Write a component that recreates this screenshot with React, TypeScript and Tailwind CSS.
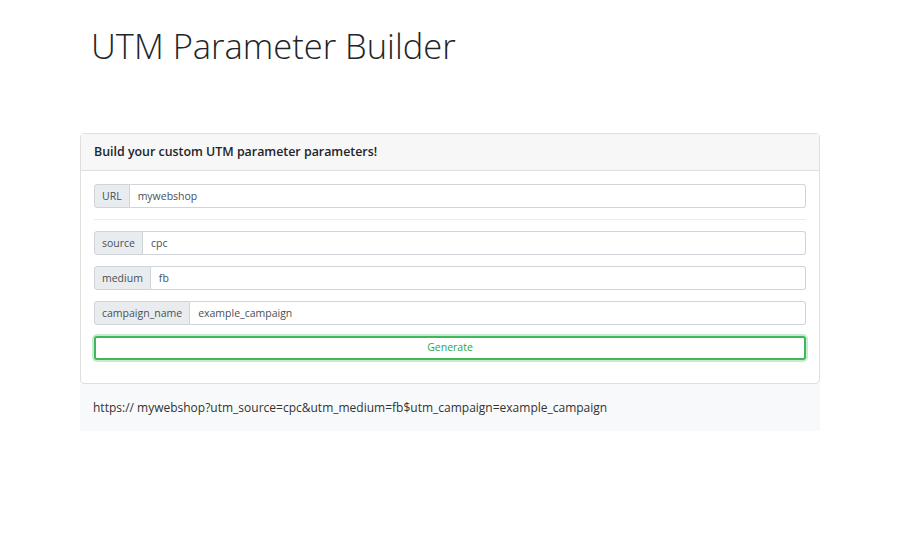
import React from "react";

const fields = [
  { label: "source", value: "cpc" },
  { label: "medium", value: "fb" },
  { label: "campaign_name", value: "example_campaign" },
];

function InputRow({ label, value }: { label: string; value: string }) {
  return (
    <div className="flex h-[24px] text-[10.5px] text-[#495057]">
      <span className="flex items-center px-[7px] pt-[1px] bg-[#e9ecef] border border-[#ced4da] rounded-l-[3px]">
        {label}
      </span>
      <div className="flex-1 flex items-center px-[8px] pt-[1px] border border-l-0 border-[#ced4da] rounded-r-[3px] bg-white">
        {value}
      </div>
    </div>
  );
}

export default function App() {
  return (
    <div className="min-h-screen bg-white font-['Open_Sans',sans-serif] text-[#212529]">
      <div className="w-[740px] ml-[80px]">
        <h1 className="pt-[20px] pl-[11px] text-[34.5px] font-light leading-[52px] text-[#212529]">
          UTM Parameter Builder
        </h1>

        <div className="mt-[61px] border border-[#dfdfdf] rounded-[4px]">
          <div className="h-[37px] flex items-center px-[13px] bg-[#f7f7f7] border-b border-[#dfdfdf] text-[12.4px] font-semibold">
            Build your custom UTM parameter parameters!
          </div>
          <div className="px-[13px] pt-[13px] pb-[23px]">
            <InputRow label="URL" value="mywebshop" />
            <hr className="my-[11px] border-[#ececec]" />
            <div className="flex flex-col gap-[11px]">
              {fields.map((f) => (
                <InputRow key={f.label} label={f.label} value={f.value} />
              ))}
              <button className="h-[24px] w-full text-[10.5px] text-[#28a745] border-2 border-[#3fb75a] rounded-[3px] shadow-[0_0_0_2px_rgba(40,167,69,0.25)] bg-white">
                Generate
              </button>
            </div>
          </div>
        </div>

        <div className="h-[47px] flex items-center px-[13px] bg-[#f8f9fa] text-[12px] text-[#333]">
          https:// mywebshop?utm_source=cpc&utm_medium=fb$utm_campaign=example_campaign
        </div>
      </div>
    </div>
  );
}
